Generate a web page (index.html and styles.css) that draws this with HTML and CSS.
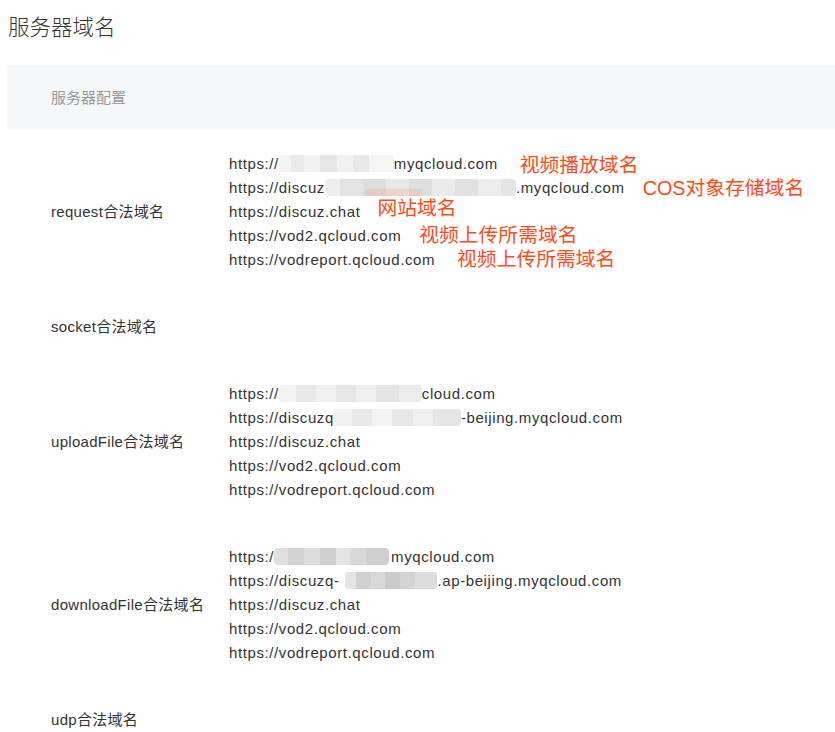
FILE: index.html
```html
<!DOCTYPE html>
<html lang="zh">
<head>
    <meta charset="UTF-8">
    <meta name="viewport" content="width=device-width, initial-scale=1.0">
    <title>服务器域名</title>
    <link rel="stylesheet" href="styles.css">
</head>
<body>
    <div class="page">
        <h1 class="page-title">服务器域名</h1>

        <div class="config">
            <div class="config-head">服务器配置</div>

            <div class="config-row">
                <div class="config-label">request合法域名</div>
                <div class="config-value">
                    <div class="url">https://<span class="mask mask-req1"></span>myqcloud.com<span class="note note-play">视频播放域名</span></div>
                    <div class="url">https://discuz<span class="mask mask-req2"></span>.myqcloud.com<span class="note note-cos">COS对象存储域名</span></div>
                    <div class="url">https://discuz.chat<span class="note note-site">网站域名</span></div>
                    <div class="url">https://vod2.qcloud.com<span class="note note-upload">视频上传所需域名</span></div>
                    <div class="url">https://vodreport.qcloud.com<span class="note note-report">视频上传所需域名</span></div>
                </div>
            </div>

            <div class="config-row">
                <div class="config-label">socket合法域名</div>
                <div class="config-value"></div>
            </div>

            <div class="config-row">
                <div class="config-label">uploadFile合法域名</div>
                <div class="config-value">
                    <div class="url">https://<span class="mask mask-up1"></span>cloud.com</div>
                    <div class="url">https://discuzq<span class="mask mask-up2"></span>-beijing.myqcloud.com</div>
                    <div class="url">https://discuz.chat</div>
                    <div class="url">https://vod2.qcloud.com</div>
                    <div class="url">https://vodreport.qcloud.com</div>
                </div>
            </div>

            <div class="config-row">
                <div class="config-label">downloadFile合法域名</div>
                <div class="config-value">
                    <div class="url">https:/<span class="mask mask-down1"></span>myqcloud.com</div>
                    <div class="url">https://discuzq-<span class="mask mask-down2"></span>.ap-beijing.myqcloud.com</div>
                    <div class="url">https://discuz.chat</div>
                    <div class="url">https://vod2.qcloud.com</div>
                    <div class="url">https://vodreport.qcloud.com</div>
                </div>
            </div>

            <div class="config-row">
                <div class="config-label">udp合法域名</div>
                <div class="config-value"></div>
            </div>
        </div>
    </div>
</body>
</html>
```

FILE: styles.css
```css
body {
    margin: 0;
    background: #fff;
    color: #333;
    font-family: 'Liberation Sans', 'Noto Sans CJK SC', sans-serif;
}

.page {
    padding: 10px 0 0 7px;
}

.page-title {
    margin: 0 0 23px;
    padding-left: 1px;
    font-family: 'Noto Sans CJK SC', sans-serif;
    font-size: 21.5px;
    font-weight: 300;
    line-height: 32px;
    color: #333;
}

.config-head {
    height: 64px;
    line-height: 64px;
    margin-bottom: 1px;
    padding-left: 44px;
    background: #f6f7f9;
    font-family: 'Noto Sans CJK SC', sans-serif;
    font-size: 15px;
    color: #999;
}

.config-row {
    display: grid;
    grid-template-columns: 222px 1fr;
    align-items: center;
    padding: 21.5px 0;
}

.config-label {
    padding-left: 44px;
    font-size: 15px;
    line-height: 24px;
    letter-spacing: 0.3px;
    color: #333;
}

.url {
    display: flex;
    align-items: center;
    height: 24px;
    font-size: 15px;
    letter-spacing: 0.6px;
    color: #333;
    white-space: nowrap;
}

/* 打码区域 */
.mask {
    display: inline-block;
    height: 17px;
    border-radius: 4px;
    filter: blur(0.6px);
}

.mask-req1 {
    width: 115px;
    background: linear-gradient(90deg, #f4f4f4 0 10%, #eaeaea 10% 22%, #f2f2f2 22% 36%, #e6e6e6 36% 50%, #f0f0f0 50% 64%, #e8e8e8 64% 78%, #f5f5f5 78% 100%);
}

.mask-req2 {
    width: 191px;
    background:
        linear-gradient(180deg, transparent 0 60%, rgba(250, 120, 100, 0.18) 60% 100%) 30% 0 / 30% 100% no-repeat,
        linear-gradient(90deg, #eeeeee 0 8%, #e3e3e3 8% 20%, #dddddd 20% 32%, #e8e8e8 32% 44%, #dedede 44% 56%, #eaeaea 56% 68%, #e2e2e2 68% 80%, #ececec 80% 92%, #e4e4e4 92% 100%);
}

.mask-up1 {
    width: 143px;
    background: linear-gradient(90deg, #f3f3f3 0 12%, #e8e8e8 12% 26%, #f0f0f0 26% 40%, #e6e6e6 40% 54%, #efefef 54% 68%, #e4e4e4 68% 84%, #ececec 84% 100%);
}

.mask-up2 {
    width: 127px;
    background: linear-gradient(90deg, #f1f1f1 0 14%, #e9e9e9 14% 30%, #f3f3f3 30% 46%, #e7e7e7 46% 62%, #efefef 62% 78%, #e5e5e5 78% 100%);
}

.mask-down1 {
    width: 115px;
    margin-right: 2px;
    background: linear-gradient(90deg, #e0e0e0 0 12%, #d3d3d3 12% 26%, #dcdcdc 26% 40%, #cecece 40% 54%, #e4e4e4 54% 66%, #d8d8d8 66% 80%, #cfcfcf 80% 100%);
}

.mask-down2 {
    width: 92px;
    margin-left: 6px;
    background: linear-gradient(90deg, #e4e4e4 0 12%, #d0d0d0 12% 28%, #d8d8d8 28% 44%, #cbcbcb 44% 60%, #d4d4d4 60% 76%, #dcdcdc 76% 100%);
}

/* 红色标注 */
.note {
    position: relative;
    font-family: 'Liberation Sans', 'Noto Sans CJK SC', sans-serif;
    font-size: 19.8px;
    line-height: 24px;
    letter-spacing: 0;
    color: #fd4b1a;
}

.note-play {
    margin-left: 22px;
    top: 1px;
}

.note-cos {
    margin-left: 18px;
}

.note-site {
    margin-left: 17px;
    top: -4px;
}

.note-upload {
    margin-left: 18px;
    top: -1px;
}

.note-report {
    margin-left: 22px;
    top: -1px;
}
```
